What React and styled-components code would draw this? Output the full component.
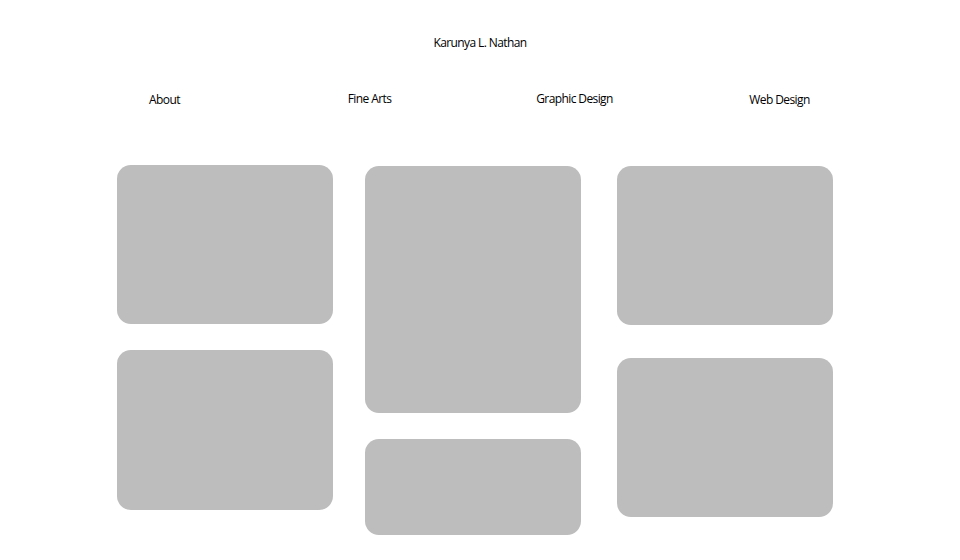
import React from 'react';
import styled, { createGlobalStyle } from 'styled-components';

const GlobalStyle = createGlobalStyle`
  body {
    margin: 0;
    background: #ffffff;
    font-family: "Open Sans", "Noto Sans", sans-serif;
    color: #000000;
  }
`;

const Page = styled.div`
  width: 960px;
  height: 560px;
  overflow: hidden;
`;

const Title = styled.h1`
  margin: 0;
  padding-top: 35px;
  height: 16px;
  font-size: 12px;
  font-weight: 500;
  line-height: 16px;
  letter-spacing: -0.6px;
  text-align: center;
`;

const Nav = styled.nav`
  display: grid;
  grid-template-columns: repeat(4, 205px);
  margin: 40px 0 0 62px;
`;

const NavItem = styled.a`
  font-size: 12px;
  font-weight: 500;
  line-height: 16px;
  letter-spacing: -0.6px;
  text-align: center;
  color: #000000;
  text-decoration: none;
  position: relative;
  top: ${(p) => p.$shift || 0}px;
`;

const Board = styled.div`
  display: flex;
  align-items: flex-start;
  gap: 32px;
  margin-top: 58px;
  padding-left: 117px;
`;

const Column = styled.div`
  display: flex;
  flex-direction: column;
  width: 216px;
  gap: ${(p) => p.$gap}px;
  margin-left: ${(p) => p.$offset || 0}px;
  margin-top: ${(p) => p.$top || 0}px;
`;

const Card = styled.div`
  height: ${(p) => p.$h}px;
  background: #bdbdbd;
  border-radius: 14px;
`;

const links = [
  { label: 'About', shift: 1 },
  { label: 'Fine Arts', shift: 0 },
  { label: 'Graphic Design', shift: 0 },
  { label: 'Web Design', shift: 1 },
];

export default function App() {
  return (
    <Page>
      <GlobalStyle />
      <Title>Karunya L. Nathan</Title>
      <Nav>
        {links.map((l) => (
          <NavItem key={l.label} href="#" $shift={l.shift}>
            {l.label}
          </NavItem>
        ))}
      </Nav>
      <Board>
        <Column $gap={26}>
          <Card $h={159} />
          <Card $h={160} />
        </Column>
        <Column $gap={26} $top={1}>
          <Card $h={247} />
          <Card $h={96} />
        </Column>
        <Column $gap={33} $top={1} $offset={4}>
          <Card $h={159} />
          <Card $h={159} />
        </Column>
      </Board>
    </Page>
  );
}
